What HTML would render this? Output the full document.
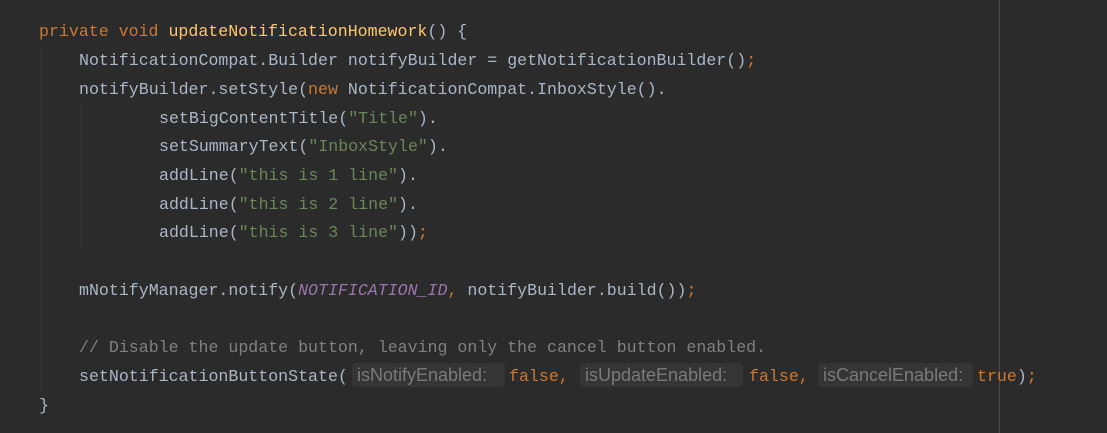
<!DOCTYPE html>
<html><head><style>
body{margin:0;width:1107px;height:433px;background:#2b2b2b;overflow:hidden;position:relative;font-family:"Liberation Mono",monospace;font-size:16.6px;color:#a9b7c6}
.l{position:absolute;white-space:pre;height:29px;line-height:29px}
.k{color:#cc7832}.m{color:#ffc66d}.s{color:#6a8759}.c{color:#808080}.i{color:#9876aa;font-style:italic}
.h{position:absolute;top:363px;height:24px;line-height:24px;background:#353535;color:#7a7a7a;border-radius:4px;font-family:"Liberation Sans",sans-serif;font-size:18px;padding:0 5px;box-sizing:border-box;white-space:nowrap;overflow:hidden}
.g{position:absolute;width:1px;background:#393939}
</style></head><body>
<div class="g" style="left:41px;top:46px;height:345px"></div>
<div class="g" style="left:81px;top:104px;height:144px"></div>
<div style="position:absolute;left:999px;top:0;width:1px;height:433px;background:#4a4a4a"></div>
<div class="l" style="left:39px;top:17px"><span class="k">private void </span><span class="m">updateNotificationHomework</span>() {</div>
<div class="l" style="left:79px;top:46px">NotificationCompat.Builder notifyBuilder = getNotificationBuilder()<span class="k">;</span></div>
<div class="l" style="left:79px;top:75px">notifyBuilder.setStyle(<span class="k">new </span>NotificationCompat.InboxStyle().</div>
<div class="l" style="left:159px;top:104px">setBigContentTitle(<span class="s">"Title"</span>).</div>
<div class="l" style="left:159px;top:132px">setSummaryText(<span class="s">"InboxStyle"</span>).</div>
<div class="l" style="left:159px;top:161px">addLine(<span class="s">"this is 1 line"</span>).</div>
<div class="l" style="left:159px;top:190px">addLine(<span class="s">"this is 2 line"</span>).</div>
<div class="l" style="left:159px;top:218px">addLine(<span class="s">"this is 3 line"</span>))<span class="k">;</span></div>
<div class="l" style="left:79px;top:276px">mNotifyManager.notify(<span class="i">NOTIFICATION_ID</span><span class="k">, </span>notifyBuilder.build())<span class="k">;</span></div>
<div class="l c" style="left:79px;top:333px">// Disable the update button, leaving only the cancel button enabled.</div>
<div class="l" style="left:79px;top:362px">setNotificationButtonState(</div>
<div class="h" style="left:352px;width:153px">isNotifyEnabled:</div>
<div class="l k" style="left:509px;top:362px">false,</div>
<div class="h" style="left:580px;width:163px">isUpdateEnabled:</div>
<div class="l k" style="left:749px;top:362px">false,</div>
<div class="h" style="left:818px;width:155px">isCancelEnabled:</div>
<div class="l" style="left:977px;top:362px"><span class="k">true</span>)<span class="k">;</span></div>
<div class="l" style="left:39px;top:391px">}</div>
</body></html>
